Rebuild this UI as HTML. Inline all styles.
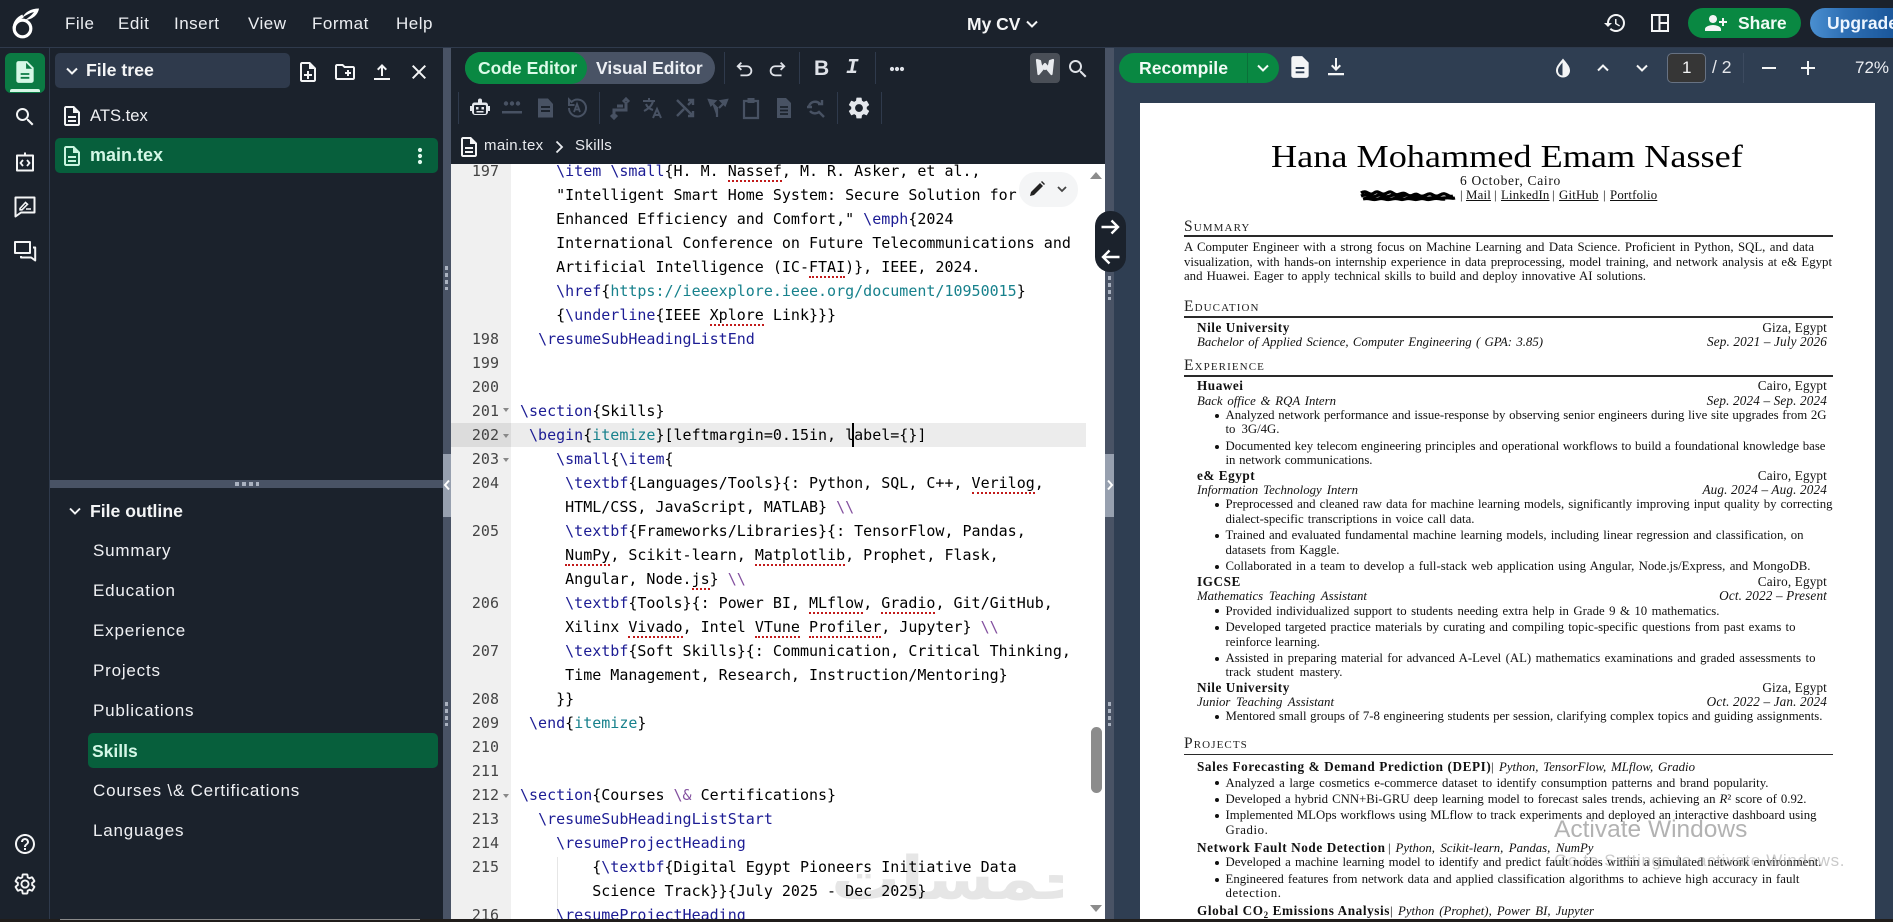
<!DOCTYPE html>
<html lang="en"><head><meta charset="utf-8"><title>My CV</title>
<style>
html,body{margin:0;padding:0;background:#1b222c;}
body{position:relative;width:1893px;height:922px;overflow:hidden;font-family:"Liberation Sans",sans-serif;color:#f4f5f6;}
.a{position:absolute;}
.t{position:absolute;white-space:nowrap;line-height:20px;}
svg{position:absolute;display:block;overflow:visible;}
.m{font-size:17px;letter-spacing:.5px;top:14px;color:#eceef2;}
.o{font-size:17px;letter-spacing:.8px;left:93px;color:#f0f1f4;}
.bd{font-weight:bold;}
.sep{position:absolute;width:1px;background:#2f3a4c;}
.dots{position:absolute;width:3px;height:24px;background:repeating-linear-gradient(#aab2c0 0 4px,transparent 4px 7px);}
pre{margin:0;font-family:"DejaVu Sans Mono",monospace;font-size:15px;line-height:24px;}
#code{color:#000;}
#code b{font-weight:normal;color:#1c1c94;}
#code u{text-decoration:none;color:#17818c;}
#code s{text-decoration:none;color:#83509f;}
#code em{font-style:normal;border-bottom:2px dotted #c11a1a;}
.l{position:absolute;white-space:nowrap;font-family:"Liberation Serif",serif;font-size:12.8px;line-height:16px;color:#111;text-align:justify;text-align-last:justify;}
.n{text-align-last:left;font-weight:bold;font-size:13.2px;letter-spacing:.55px;}
.r{text-align-last:right;text-align:right;font-size:13.2px;letter-spacing:.15px;}
.it{font-style:italic;}
.h{position:absolute;white-space:nowrap;font-family:"Liberation Serif",serif;font-size:15.5px;line-height:18px;color:#222;font-variant:small-caps;letter-spacing:1.1px;left:1184px;}
.rule{position:absolute;left:1184px;width:649px;height:1.5px;background:#2a2a2a;}
.bu{position:absolute;left:1215px;width:4px;height:4px;border-radius:50%;background:#111;}
.lk{position:absolute;white-space:nowrap;font-family:"Liberation Serif",serif;font-size:12.8px;line-height:16px;color:#111;text-decoration:underline;}
</style></head>
<body>

<!-- top bar -->
<div class="a" style="left:0;top:47px;width:1893px;height:1px;background:#2f3a4c"></div>
<svg style="left:10px;top:7px" width="30" height="32" viewBox="0 0 30 32"><circle cx="12.500" cy="21.500" r="8.300" fill="none" stroke="#fff" stroke-width="3.200"/><path d="M4.200 21.500C4.200 16 7.500 11.500 13 9" fill="none" stroke="#fff" stroke-width="3.200"/><path d="M12.500 10.500C15 5 21 1.500 29 1.500c-1 6-6 11-14 11.500 3-2 7-5 9-8-4 1-8 3-11.500 5.500z" fill="#fff"/></svg>
<div class="t m" style="left:65px">File</div>
<div class="t m" style="left:118px">Edit</div>
<div class="t m" style="left:174px">Insert</div>
<div class="t m" style="left:248px">View</div>
<div class="t m" style="left:312px">Format</div>
<div class="t m" style="left:396px">Help</div>
<div class="t bd" style="left:967px;top:14px;font-size:17.5px;color:#f4f5f6">My CV</div>
<svg style="left:1024px;top:16px" width="16" height="16" viewBox="0 0 16 16"><path d="M3 5.500l5 5 5-5" fill="none" stroke="#f4f5f6" stroke-width="2"/></svg>
<svg style="left:1603px;top:11px" width="24" height="24" viewBox="0 0 24 24"><path fill="#f4f5f6" d="M13 3c-4.970 0-9 4.030-9 9H1l3.890 3.890.07.14L9 12H6c0-3.870 3.130-7 7-7s7 3.130 7 7-3.130 7-7 7c-1.930 0-3.680-.79-4.940-2.060l-1.420 1.420C8.270 19.990 10.510 21 13 21c4.970 0 9-4.030 9-9s-4.030-9-9-9zm-1 5v5l4.280 2.540.72-1.210-3.500-2.080V8H12z"/></svg>
<svg style="left:1650px;top:13px" width="20" height="20" viewBox="0 0 20 20"><path d="M2 2h16v16H2zM9.500 2v16M9.500 10H18" fill="none" stroke="#f4f5f6" stroke-width="2"/></svg>
<div class="a" style="left:1688px;top:8px;width:113px;height:30px;border-radius:15px;background:#098842"></div>
<svg style="left:1704px;top:11px;transform:scaleX(-1)" width="24" height="24" viewBox="0 0 24 24"><path fill="#f4f5f6" d="M15 12c2.210 0 4-1.790 4-4s-1.790-4-4-4-4 1.790-4 4 1.790 4 4 4zm-9-2V7H4v3H1v2h3v3h2v-3h3v-2H6zm9 4c-2.670 0-8 1.340-8 4v2h16v-2c0-2.660-5.330-4-8-4z"/></svg>
<div class="t bd" style="left:1738px;top:13px;font-size:17.5px;color:#f0fbf5">Share</div>
<div class="a" style="left:1810px;top:8px;width:100px;height:30px;border-radius:15px;background:linear-gradient(90deg,#4a8fd0,#2e6fb4 35%,#144f92)"></div>
<div class="t bd" style="left:1827px;top:13px;font-size:17.5px;color:#eef6ff">Upgrade</div>

<!-- rail -->
<div class="a" style="left:49px;top:48px;width:1px;height:871px;background:#2f3a4c"></div>
<div class="a" style="left:5px;top:53px;width:40px;height:40px;border-radius:6px;background:#0b7a43"></div>
<div class="a" style="left:10px;top:89px;width:30px;height:3px;border-radius:2px 2px 0 0;background:#d6f7e6"></div>
<svg style="left:12px;top:59px" width="26" height="26" viewBox="0 0 24 24"><path fill="#d6f7e6" fill-rule="evenodd" d="M6 2h8l6 6v12c0 1.100-.9 2-2 2H6c-1.100 0-2-.9-2-2V4c0-1.100.9-2 2-2zm7 1.500V9h5.500zM8 13v1.700h8V13zm0 3.500v1.700h8v-1.700z"/></svg>
<svg style="left:13px;top:105px" width="24" height="24" viewBox="0 0 24 24"><path fill="#f4f5f6" d="M15.500 14h-.79l-.28-.27C15.410 12.590 16 11.110 16 9.500 16 5.910 13.090 3 9.500 3S3 5.910 3 9.500 5.910 16 9.500 16c1.610 0 3.090-.59 4.230-1.570l.27.28v.79l5 4.990L20.490 19l-4.990-5zm-6 0C7.010 14 5 11.990 5 9.500S7.010 5 9.500 5 14 7.010 14 9.500 11.990 14 9.500 14z"/></svg>
<svg style="left:13px;top:150px" width="24" height="24" viewBox="0 0 24 24"><path d="M12 2.500v3M4 5.500h16v15H4z" fill="none" stroke="#f4f5f6" stroke-width="2" stroke-linejoin="round"/><path d="M10 10l-2.500 3 2.500 3M14 10l2.500 3-2.500 3" fill="none" stroke="#f4f5f6" stroke-width="1.800"/></svg>
<svg style="left:13px;top:194px" width="24" height="24" viewBox="0 0 24 24"><path d="M2.500 3.500h19v15H8l-5.500 4z" fill="none" stroke="#f4f5f6" stroke-width="2" stroke-linejoin="round"/><path d="M7 14.500l5.500-6 2 1.800-5.500 5.500H7zM13 15h5" fill="none" stroke="#f4f5f6" stroke-width="1.600"/></svg>
<svg style="left:13px;top:239px" width="24" height="24" viewBox="0 0 24 24"><path d="M2 3h15v11H6l-4 0z" fill="none" stroke="#f4f5f6" stroke-width="2" stroke-linejoin="round"/><path d="M20 8.500h2.200v13l-4-3H8v-1.500" fill="none" stroke="#f4f5f6" stroke-width="2" stroke-linejoin="round"/></svg>
<svg style="left:13px;top:832px" width="24" height="24" viewBox="0 0 24 24"><path fill="#f4f5f6" d="M11 18h2v-2h-2v2zm1-16C6.480 2 2 6.480 2 12s4.480 10 10 10 10-4.480 10-10S17.520 2 12 2zm0 18c-4.410 0-8-3.590-8-8s3.590-8 8-8 8 3.590 8 8-3.590 8-8 8zm0-14c-2.210 0-4 1.790-4 4h2c0-1.100.9-2 2-2s2 .9 2 2c0 2-3 1.750-3 5h2c0-2.250 3-2.500 3-5 0-2.210-1.790-4-4-4z"/></svg>
<svg style="left:13px;top:872px" width="24" height="24" viewBox="0 0 24 24"><path fill="none" stroke="#f4f5f6" stroke-width="1.900" d="M19.140 12.940c.04-.3.06-.61.06-.94 0-.32-.02-.64-.07-.94l2.030-1.580c.18-.14.23-.41.12-.61l-1.920-3.320c-.12-.22-.37-.29-.59-.22l-2.390.96c-.5-.38-1.030-.7-1.620-.94l-.36-2.540c-.04-.24-.24-.41-.48-.41h-3.840c-.24 0-.43.17-.47.41l-.36 2.540c-.59.24-1.130.57-1.620.94l-2.390-.96c-.22-.08-.47 0-.59.22L2.740 8.870c-.12.21-.08.47.12.61l2.030 1.580c-.05.3-.09.63-.09.94s.02.64.07.94l-2.030 1.580c-.18.14-.23.41-.12.61l1.920 3.320c.12.22.37.29.59.22l2.390-.96c.5.38 1.030.7 1.620.94l.36 2.540c.05.24.24.41.48.41h3.840c.24 0 .44-.17.47-.41l.36-2.540c.59-.24 1.130-.56 1.620-.94l2.390.96c.22.08.47 0 .59-.22l1.920-3.320c.12-.22.07-.47-.12-.61l-2.010-1.580zM12 15.600c-1.980 0-3.600-1.620-3.600-3.600s1.620-3.600 3.600-3.600 3.600 1.620 3.600 3.600-1.620 3.600-3.600 3.600z"/></svg>

<!-- file tree -->
<div class="a" style="left:55px;top:53px;width:235px;height:35px;border-radius:5px;background:#2f3a4c"></div>
<svg style="left:64px;top:63px" width="16" height="16" viewBox="0 0 16 16"><path d="M3 5.500l5 5 5-5" fill="none" stroke="#f4f5f6" stroke-width="2"/></svg>
<div class="t bd" style="left:86px;top:60px;font-size:17.7px">File tree</div>
<svg style="left:296px;top:60px" width="24" height="24" viewBox="0 0 24 24"><path fill="#f4f5f6" d="M13 11h-2v3H8v2h3v3h2v-3h3v-2h-3zm1-9H6c-1.100 0-2 .9-2 2v16c0 1.100.89 2 1.990 2H18c1.100 0 2-.9 2-2V8l-6-6zm4 18H6V4h7v5h5v11z"/></svg>
<svg style="left:333px;top:60px" width="24" height="24" viewBox="0 0 24 24"><path fill="#f4f5f6" d="M20 6h-8l-2-2H4c-1.110 0-1.990.89-1.990 2L2 18c0 1.110.89 2 2 2h16c1.110 0 2-.89 2-2V8c0-1.110-.89-2-2-2zm0 12H4V6h5.170l2 2H20v10zm-8-4h2v2h2v-2h2v-2h-2v-2h-2v2h-2z"/></svg>
<svg style="left:370px;top:60px" width="24" height="24" viewBox="0 0 24 24"><path fill="#f4f5f6" d="M11 16V7.830L8.410 10.410 7 9l5-5 5 5-1.410 1.410L13 7.830V16zM4 18h16v2H4z"/></svg>
<svg style="left:407px;top:60px" width="24" height="24" viewBox="0 0 24 24"><path fill="#f4f5f6" d="M19 6.410 17.590 5 12 10.590 6.410 5 5 6.410 10.590 12 5 17.590 6.410 19 12 13.410 17.590 19 19 17.590 13.410 12z"/></svg>

<svg style="left:60px;top:103px" width="24" height="26" viewBox="0 0 24 26"><path fill="#f4f5f6" d="M8 17h8v2H8zm0-4h8v2H8zm6-10H6c-1.100 0-2 .9-2 2v16c0 1.100.89 2 1.990 2H18c1.100 0 2-.9 2-2V9l-6-6zm4 18H6V5h7v5h5v11z"/></svg>
<div class="t" style="left:90px;top:106px;font-size:16.6px;color:#f0f1f4">ATS.tex</div>
<div class="a" style="left:55px;top:138px;width:383px;height:35px;border-radius:5px;background:#075f3c"></div>
<svg style="left:60px;top:143px" width="24" height="26" viewBox="0 0 24 26"><path fill="#c9f5df" d="M8 17h8v2H8zm0-4h8v2H8zm6-10H6c-1.100 0-2 .9-2 2v16c0 1.100.89 2 1.990 2H18c1.100 0 2-.9 2-2V9l-6-6zm4 18H6V5h7v5h5v11z"/></svg>
<div class="t bd" style="left:90px;top:145px;font-size:18px;color:#d3f7e6">main.tex</div>
<svg style="left:417px;top:147px" width="6" height="18" viewBox="0 0 6 18"><circle cx="3" cy="3" r="2.100" fill="#dff8ec"/><circle cx="3" cy="9" r="2.100" fill="#dff8ec"/><circle cx="3" cy="15" r="2.100" fill="#dff8ec"/></svg>

<!-- outline -->
<div class="a" style="left:50px;top:480px;width:393px;height:8px;background:#495365"></div>
<div class="a" style="left:235px;top:482px;width:24px;height:4px;background:repeating-linear-gradient(90deg,#aab2c0 0 4px,transparent 4px 7px)"></div>
<svg style="left:67px;top:503px" width="16" height="16" viewBox="0 0 16 16"><path d="M3 5.500l5 5 5-5" fill="none" stroke="#f4f5f6" stroke-width="1.900"/></svg>
<div class="t bd" style="left:90px;top:501px;font-size:17.6px">File outline</div>
<div class="t o" style="top:541px">Summary</div>
<div class="t o" style="top:581px">Education</div>
<div class="t o" style="top:621px">Experience</div>
<div class="t o" style="top:661px">Projects</div>
<div class="t o" style="top:701px">Publications</div>
<div class="a" style="left:88px;top:733px;width:350px;height:35px;border-radius:5px;background:#075f3c"></div>
<div class="t bd" style="left:92px;top:741px;font-size:17.5px;color:#d3f7e6">Skills</div>
<div class="t o" style="top:781px">Courses \&amp; Certifications</div>
<div class="t o" style="top:821px">Languages</div>

<!-- left resizer -->
<div class="a" style="left:443px;top:48px;width:8px;height:871px;background:#495365"></div>
<div class="a" style="left:443px;top:454px;width:8px;height:63px;background:#97a0af"></div>
<svg style="left:443px;top:479px" width="8" height="12" viewBox="0 0 8 12"><path d="M6 1.500L2 6l4 4.500" fill="none" stroke="#fff" stroke-width="2"/></svg>
<div class="dots" style="left:445px;top:266px"></div>
<div class="dots" style="left:445px;top:702px"></div>

<!-- editor toolbar -->
<div class="a" style="left:465px;top:52px;width:250px;height:32px;border-radius:16px;background:#495365"></div>
<div class="a" style="left:465px;top:52px;width:122px;height:32px;border-radius:16px;background:#098842"></div>
<div class="t bd" style="left:478px;top:58px;font-size:17.5px;color:#dcfbe9">Code Editor</div>
<div class="t bd" style="left:596px;top:58px;font-size:17.5px;color:#eceff4">Visual Editor</div>
<div class="sep" style="left:724px;top:52px;height:32px"></div>
<svg style="left:735px;top:59px" width="20" height="20" viewBox="0 0 22 22"><path d="M7 4L3 8l4 4M3 8h10a4.500 4.500 0 0 1 0 10H6" fill="none" stroke="#dfe2e8" stroke-width="2"/></svg>
<svg style="left:767px;top:59px;transform:scaleX(-1)" width="20" height="20" viewBox="0 0 22 22"><path d="M7 4L3 8l4 4M3 8h10a4.500 4.500 0 0 1 0 10H6" fill="none" stroke="#dfe2e8" stroke-width="2"/></svg>
<div class="sep" style="left:799px;top:52px;height:32px"></div>
<div class="t bd" style="left:814px;top:59px;font-size:21px;color:#dfe2e8">B</div>
<div class="t bd" style="left:846px;top:59px;font-size:21px;font-style:italic;font-family:'Liberation Mono',monospace;color:#dfe2e8">I</div>
<div class="sep" style="left:875px;top:52px;height:32px"></div>
<svg style="left:889px;top:66px" width="16" height="6" viewBox="0 0 16 6"><circle cx="3" cy="3" r="2.100" fill="#dfe2e8"/><circle cx="8" cy="3" r="2.100" fill="#dfe2e8"/><circle cx="13" cy="3" r="2.100" fill="#dfe2e8"/></svg>
<div class="a" style="left:1030px;top:53px;width:30px;height:30px;border-radius:4px;background:#4a4f57"></div>
<svg style="left:1034px;top:57px" width="22" height="22" viewBox="0 0 22 22"><path d="M3 3l1.500 14 5-6 1.500 1 1.500-1 5 6L19 3l-3 1-1.500 7L11 7 7.500 11 6 4z" fill="#e9ebef" stroke="#e9ebef" stroke-width="2.200" stroke-linejoin="round"/></svg>
<svg style="left:1066px;top:57px" width="24" height="24" viewBox="0 0 24 24"><path fill="#dfe2e8" d="M15.500 14h-.79l-.28-.27C15.410 12.590 16 11.110 16 9.500 16 5.910 13.090 3 9.500 3S3 5.910 3 9.500 5.910 16 9.500 16c1.610 0 3.090-.59 4.230-1.570l.27.28v.79l5 4.990L20.490 19l-4.990-5zm-6 0C7.010 14 5 11.990 5 9.500S7.010 5 9.500 5 14 7.010 14 9.500 11.990 14 9.500 14z"/></svg>

<!-- row 2 -->
<div class="sep" style="left:458px;top:92px;height:32px"></div>
<svg style="left:469px;top:97px" width="22" height="22" viewBox="0 0 22 22"><path d="M11 1.500a2 2 0 0 1 2 2v2h3.500a2.500 2.500 0 0 1 2.500 2.500v1h2v5h-2v1a3 3 0 0 1-3 3H6a3 3 0 0 1-3-3v-1H1V9h2V8a2.500 2.500 0 0 1 2.500-2.500H9v-2a2 2 0 0 1 2-2z" fill="#e4e7ec"/><rect x="5" y="8" width="12" height="9" rx="1" fill="#1b222c"/><rect x="7" y="10" width="2.500" height="2.500" fill="#e4e7ec"/><rect x="12.500" y="10" width="2.500" height="2.500" fill="#e4e7ec"/><rect x="7.500" y="14" width="7" height="1.500" fill="#e4e7ec"/></svg>
<svg style="left:501px;top:97px" width="22" height="22" viewBox="0 0 22 22"><circle cx="5" cy="6.500" r="2.200" fill="#485263"/><circle cx="11" cy="6.500" r="2.200" fill="#485263"/><circle cx="17" cy="6.500" r="2.200" fill="#485263"/><rect x="1" y="14" width="20" height="2.500" fill="#485263"/></svg>
<svg style="left:534px;top:97px" width="22" height="22" viewBox="0 0 22 22"><path d="M4 1.500h10L19 7v13.500H4z" fill="#485263"/><path d="M7 10h9M7 14h9" stroke="#1b222c" stroke-width="2"/></svg>
<svg style="left:566px;top:97px" width="22" height="22" viewBox="0 0 22 22"><path d="M3 11a8.500 8.500 0 1 0 2.500-6L3 2.500V8h5.500" fill="none" stroke="#485263" stroke-width="2"/><path d="M8 15l3-8 3 8M9 12.500h4" fill="none" stroke="#485263" stroke-width="1.800"/></svg>
<div class="sep" style="left:599px;top:92px;height:32px"></div>
<svg style="left:609px;top:97px" width="22" height="22" viewBox="0 0 22 22"><path d="M5 21v-8h12V5M14 5l3-3 3 3M2 18l3 3 3-3M8 9h6" fill="none" stroke="#485263" stroke-width="3"/></svg>
<svg style="left:642px;top:97px" width="22" height="22" viewBox="0 0 22 22"><path d="M1 4h12M7 1v3M11 4c-1 5-5 8-9 10M4 7c1 3 4 5 7 6M11 21l4-9 4 9M12.500 18h5" fill="none" stroke="#485263" stroke-width="2"/></svg>
<svg style="left:675px;top:97px" width="22" height="22" viewBox="0 0 22 22"><path d="M2 3l16 16M2 19l7-7M13 8l5-5M13 3h5v5M18 14v5h-5" fill="none" stroke="#485263" stroke-width="2.400"/></svg>
<svg style="left:707px;top:97px" width="22" height="22" viewBox="0 0 22 22"><path d="M10 20V11L5 6M12 11l5-5M2 3l6 1-4 4zM20 3l-6 1 4 4z" fill="#485263" stroke="#485263" stroke-width="2.200"/></svg>
<svg style="left:740px;top:97px" width="22" height="22" viewBox="0 0 22 22"><path d="M4 4h14v17H4z" fill="none" stroke="#485263" stroke-width="2.200"/><rect x="7.500" y="1" width="7" height="5" fill="#485263"/></svg>
<svg style="left:773px;top:97px" width="22" height="22" viewBox="0 0 22 22"><path d="M4 1h9l5 5v15H4z" fill="#485263"/><path d="M7 10h8M7 13.500h8M7 17h8" stroke="#1b222c" stroke-width="1.800"/></svg>
<svg style="left:805px;top:97px" width="22" height="22" viewBox="0 0 22 22"><path d="M15 7a6.500 6.500 0 0 0-11 2M5 14a6.500 6.500 0 0 0 9 1l5 5M13 7h4V3M2 10h5" fill="none" stroke="#485263" stroke-width="2.400"/></svg>
<div class="sep" style="left:837px;top:92px;height:32px"></div>
<svg style="left:846px;top:95px" width="26" height="26" viewBox="0 0 24 24"><path fill="#e4e7ec" d="M19.140 12.940c.04-.3.06-.61.06-.94 0-.32-.02-.64-.07-.94l2.030-1.580c.18-.14.23-.41.12-.61l-1.920-3.320c-.12-.22-.37-.29-.59-.22l-2.390.96c-.5-.38-1.030-.7-1.620-.94l-.36-2.540c-.04-.24-.24-.41-.48-.41h-3.840c-.24 0-.43.17-.47.41l-.36 2.540c-.59.24-1.130.57-1.620.94l-2.390-.96c-.22-.08-.47 0-.59.22L2.740 8.870c-.12.21-.08.47.12.61l2.030 1.580c-.05.3-.09.63-.09.94s.02.64.07.94l-2.030 1.580c-.18.14-.23.41-.12.61l1.920 3.320c.12.22.37.29.59.22l2.390-.96c.5.38 1.030.7 1.620.94l.36 2.540c.05.24.24.41.48.41h3.840c.24 0 .44-.17.47-.41l.36-2.540c.59-.24 1.130-.56 1.620-.94l2.390.96c.22.08.47 0 .59-.22l1.920-3.320c.12-.22.07-.47-.12-.61l-2.010-1.580zM12 15.600c-1.980 0-3.600-1.620-3.600-3.600s1.620-3.600 3.600-3.600 3.600 1.620 3.600 3.600-1.620 3.600-3.600 3.600z"/></svg>
<div class="sep" style="left:881px;top:92px;height:32px"></div>

<!-- breadcrumb -->
<svg style="left:457px;top:134px" width="24" height="26" viewBox="0 0 24 26"><path fill="#f4f5f6" d="M8 17h8v2H8zm0-4h8v2H8zm6-10H6c-1.100 0-2 .9-2 2v16c0 1.100.89 2 1.990 2H18c1.100 0 2-.9 2-2V9l-6-6zm4 18H6V5h7v5h5v11z"/></svg>
<div class="t" style="left:484px;top:136px;font-size:15px;letter-spacing:.35px;color:#e9ebef">main.tex</div>
<svg style="left:553px;top:140px" width="12" height="14" viewBox="0 0 12 14"><path d="M3.500 1.500L9 7l-5.500 5.500" fill="none" stroke="#e9ebef" stroke-width="1.800"/></svg>
<div class="t" style="left:575px;top:136px;font-size:15px;letter-spacing:.35px;color:#e9ebef">Skills</div>

<!-- editor -->
<div class="a" style="left:451px;top:164px;width:654px;height:755px;background:#fff;overflow:hidden">
 <div class="a" style="left:0;top:0;width:60px;height:755px;background:#f0f0f0"></div>
 <div class="a" style="left:0;top:259px;width:60px;height:24px;background:#dcdcdc"></div>
 <div class="a" style="left:60px;top:259px;width:575px;height:24px;background:#ececec"></div>
 <div class="a" style="left:106px;top:693px;width:1px;height:62px;background:#e6e6e6"></div>
 <div class="a" style="left:401px;top:259px;width:2px;height:24px;background:#000"></div>
 <pre class="a" style="left:0;top:-5px;width:48px;text-align:right;color:#444">197






198
199
200
201
202
203
204

205


206

207

208
209
210
211
212
213
214
215

216</pre>
 <div class="a" style="left:52px;top:244px;width:0;height:0;border:3.500px solid transparent;border-top:4px solid #888;border-bottom:0"></div>
 <div class="a" style="left:52px;top:270px;width:0;height:0;border:3.500px solid transparent;border-top:4px solid #888;border-bottom:0"></div>
 <div class="a" style="left:52px;top:294px;width:0;height:0;border:3.500px solid transparent;border-top:4px solid #888;border-bottom:0"></div>
 <div class="a" style="left:52px;top:630px;width:0;height:0;border:3.500px solid transparent;border-top:4px solid #888;border-bottom:0"></div>
 <div class="a" style="left:380px;top:680px;width:232px;height:70px;overflow:hidden"><div style="position:absolute;left:0;top:0;font:bold 60px/70px 'DejaVu Sans',sans-serif;color:#e6e6e6;white-space:nowrap;transform:scaleX(1.15);transform-origin:0 0" dir="rtl">خمسات</div></div>
 <pre id="code" class="a" style="left:69px;top:-5px"><code style="font:inherit">    <b>\item</b> <b>\small</b>{H. M. <em>Nassef</em>, M. R. Asker, et al.,
    "Intelligent Smart Home System: Secure Solution for
    Enhanced Efficiency and Comfort," <b>\emph</b>{2024
    International Conference on Future Telecommunications and
    Artificial Intelligence (IC-<em>FTAI</em>)}, IEEE, 2024.
    <b>\href</b>{<u>https://ieeexplore.ieee.org/document/10950015</u>}
    {<b>\underline</b>{IEEE <em>Xplore</em> Link}}}
  <b>\resumeSubHeadingListEnd</b>


<b>\section</b>{Skills}
 <b>\begin</b>{<u>itemize</u>}[leftmargin=0.15in, label={}]
    <b>\small</b>{<b>\item</b>{
     <b>\textbf</b>{Languages/Tools}{: Python, SQL, C++, <em>Verilog</em>,
     HTML/CSS, JavaScript, MATLAB} <s>\\</s>
     <b>\textbf</b>{Frameworks/Libraries}{: TensorFlow, Pandas,
     <em>NumPy</em>, Scikit-learn, <em>Matplotlib</em>, Prophet, Flask,
     Angular, Node.<em>js</em>} <s>\\</s>
     <b>\textbf</b>{Tools}{: Power BI, <em>MLflow</em>, <em>Gradio</em>, Git/GitHub,
     Xilinx <em>Vivado</em>, Intel <em>VTune</em> <em>Profiler</em>, Jupyter} <s>\\</s>
     <b>\textbf</b>{Soft Skills}{: Communication, Critical Thinking,
     Time Management, Research, Instruction/Mentoring}
    }}
 <b>\end</b>{<u>itemize</u>}


<b>\section</b>{Courses <s>\&amp;</s> Certifications}
  <b>\resumeSubHeadingListStart</b>
    <b>\resumeProjectHeading</b>
        {<b>\textbf</b>{Digital Egypt Pioneers Initiative Data
        Science Track}}{July 2025 - Dec 2025}
    <b>\resumeProjectHeading</b></code></pre>
 <!-- scrollbar -->
 <div class="a" style="left:639px;top:8px;width:0;height:0;border:6px solid transparent;border-bottom:7px solid #8c8c8c;border-top:0"></div>
 <div class="a" style="left:639.500px;top:563px;width:11px;height:66px;border-radius:6px;background:#8c8c8c"></div>
 <div class="a" style="left:639px;top:741px;width:0;height:0;border:6px solid transparent;border-top:7px solid #8c8c8c;border-bottom:0"></div>
 <!-- pencil pill -->
 <div class="a" style="left:568px;top:8px;width:59px;height:35px;border-radius:17px;background:#f4f5f6"></div>
 <svg style="left:576px;top:15px" width="20" height="20" viewBox="0 0 20 20"><path d="M3 17l1-4L13 4l3 3-9 9z" fill="#222"/><path d="M14 3l1-1 3 3-1 1z" fill="#222"/></svg>
 <svg style="left:604px;top:18px" width="14" height="14" viewBox="0 0 14 14"><path d="M3 5l4 4 4-4" fill="none" stroke="#444" stroke-width="1.800"/></svg>
</div>

<!-- right resizer -->
<div class="a" style="left:1105px;top:48px;width:9px;height:871px;background:#495365"></div>
<div class="a" style="left:1105px;top:454px;width:9px;height:63px;background:#97a0af"></div>
<svg style="left:1105px;top:479px" width="9" height="12" viewBox="0 0 9 12"><path d="M3 1.500L7 6l-4 4.500" fill="none" stroke="#fff" stroke-width="2"/></svg>
<div class="dots" style="left:1108px;top:276px"></div>
<div class="dots" style="left:1108px;top:702px"></div>

<!-- pdf pane -->
<div class="a" style="left:1114px;top:48px;width:779px;height:871px;background:#2f3e52"></div>
<div class="a" style="left:1119px;top:53px;width:160px;height:30px;border-radius:15px;background:#098842"></div>
<div class="a" style="left:1247px;top:53px;width:1px;height:30px;background:#0a7039"></div>
<div class="t bd" style="left:1139px;top:58px;font-size:17.6px;color:#f2fbf6">Recompile</div>
<svg style="left:1255px;top:60px" width="16" height="16" viewBox="0 0 16 16"><path d="M3 5.500l5 5 5-5" fill="none" stroke="#f2fbf6" stroke-width="2"/></svg>
<svg style="left:1287px;top:54px" width="26" height="26" viewBox="0 0 24 24"><path fill="#f4f5f6" fill-rule="evenodd" d="M6 2h8l6 6v12c0 1.100-.9 2-2 2H6c-1.100 0-2-.9-2-2V4c0-1.100.9-2 2-2zM8 12v1.800h8V12zm0 4v1.800h8V16z"/></svg>
<svg style="left:1324px;top:55px" width="24" height="24" viewBox="0 0 24 24"><path fill="#f4f5f6" d="M11 3h2v9.170l2.590-2.580L17 11l-5 5-5-5 1.410-1.410L11 12.170zM4 18h16v2.200H4z"/></svg>
<svg style="left:1553px;top:57px" width="20" height="22" viewBox="0 0 20 22"><path d="M10 1.500c3 4 7 7.500 7 12a7 7 0 0 1-14 0c0-4.500 4-8 7-12z" fill="#f4f5f6"/><path d="M9.500 5.500c-2 2.500-4.500 5-4.500 8s2 5 4.500 5z" fill="#2f3e52"/></svg>
<svg style="left:1595px;top:60px" width="16" height="16" viewBox="0 0 16 16"><path d="M3 10.500l5-5 5 5" fill="none" stroke="#f4f5f6" stroke-width="2"/></svg>
<svg style="left:1634px;top:60px" width="16" height="16" viewBox="0 0 16 16"><path d="M3 5.500l5 5 5-5" fill="none" stroke="#f4f5f6" stroke-width="2"/></svg>
<div class="a" style="left:1667px;top:53px;width:39px;height:30px;box-sizing:border-box;border:1px solid #677283;border-radius:5px;background:#363636"></div>
<div class="t" style="left:1682px;top:58px;font-size:17px;color:#f4f5f6">1</div>
<div class="t" style="left:1712px;top:57px;font-size:17.5px;color:#e6e8ec">/ 2</div>
<div class="a" style="left:1743px;top:53px;width:1px;height:30px;background:#3c4a5f"></div>
<div class="a" style="left:1762px;top:66.500px;width:14px;height:2.500px;background:#f4f5f6"></div>
<div class="a" style="left:1801px;top:66.500px;width:14px;height:2.500px;background:#f4f5f6"></div>
<div class="a" style="left:1806.750px;top:61px;width:2.500px;height:14px;background:#f4f5f6"></div>
<div class="t" style="left:1855px;top:58px;font-size:17px;color:#eceef2">72%</div>

<!-- split arrows -->
<div class="a" style="left:1095px;top:211px;width:31px;height:61px;border-radius:15px;background:#1b222c"></div>
<svg style="left:1100px;top:217px" width="21" height="20" viewBox="0 0 21 20"><path d="M1.500 10H18M11.500 3.500L18 10l-6.500 6.500" fill="none" stroke="#fff" stroke-width="2.400"/></svg>
<svg style="left:1100px;top:247px;transform:scaleX(-1)" width="21" height="20" viewBox="0 0 21 20"><path d="M1.500 10H18M11.500 3.500L18 10l-6.500 6.500" fill="none" stroke="#fff" stroke-width="2.400"/></svg>

<!-- pdf page -->
<div class="a" style="left:1140px;top:103px;width:735px;height:816px;background:#fff"></div>
<div class="a" style="left:1271px;top:137px;white-space:nowrap;font:31.500px/40px 'Liberation Serif',serif;color:#000;transform:scaleX(1.15);transform-origin:0 0">Hana Mohammed Emam Nassef</div>
<div class="l" style="left:1460px;top:173px;font-size:13.5px;letter-spacing:.7px;text-align-last:left">6 October, Cairo</div>
<svg style="left:1360px;top:188px" width="100" height="14" viewBox="0 0 100 14"><path d="M1 5c6-4 8 4 13 0s7 4 13 0 6 4 13 1 7 4 13 1 6 4 13 0 7 4 14 0 7 3 13 1M1 8c7-3 9 3 15 0s7 3 14 0 7 3 13 0 8 3 14 1 6 2 13 1 7 1 14 0 7 1 11 0M3 11c7-2 9 2 15 0s7 2 14 0 7 2 13 0 8 2 14 0 6 2 13 0 7 1 13 0" fill="none" stroke="#000" stroke-width="3.200"/></svg>
<div class="lk" style="left:1460px;top:187px;text-decoration:none">|</div>
<div class="lk" style="left:1466px;top:187px;letter-spacing:.2px">Mail</div>
<div class="lk" style="left:1494px;top:187px;text-decoration:none">|</div>
<div class="lk" style="left:1501px;top:187px;letter-spacing:.2px">LinkedIn</div>
<div class="lk" style="left:1552px;top:187px;text-decoration:none">|</div>
<div class="lk" style="left:1559px;top:187px;letter-spacing:.2px">GitHub</div>
<div class="lk" style="left:1603px;top:187px;text-decoration:none">|</div>
<div class="lk" style="left:1610px;top:187px;letter-spacing:.2px">Portfolio</div>

<div class="h" style="top:218px">Summary</div><div class="rule" style="top:235px"></div>
<div class="l" style="left:1184px;top:239px;width:630px">A Computer Engineer with a strong focus on Machine Learning and Data Science. Proficient in Python, SQL, and data</div>
<div class="l" style="left:1184px;top:254px;width:648px">visualization, with hands-on internship experience in data preprocessing, model training, and network analysis at e&amp; Egypt</div>
<div class="l" style="left:1184px;top:268px;width:462px">and Huawei. Eager to apply technical skills to build and deploy innovative AI solutions.</div>

<div class="h" style="top:298px">Education</div><div class="rule" style="top:316px"></div>
<div class="l n" style="left:1197px;top:320px">Nile University</div>
<div class="l r" style="left:1627px;top:320px;width:200px">Giza, Egypt</div>
<div class="l it" style="left:1197px;top:334px;width:346px">Bachelor of Applied Science, Computer Engineering ( GPA: 3.85)</div>
<div class="l r it" style="left:1627px;top:334px;width:200px">Sep. 2021 – July 2026</div>

<div class="h" style="top:357px">Experience</div><div class="rule" style="top:375px"></div>
<div class="l n" style="left:1197px;top:378px">Huawei</div>
<div class="l r" style="left:1627px;top:378px;width:200px">Cairo, Egypt</div>
<div class="l it" style="left:1197px;top:393px;width:139px">Back office &amp; RQA Intern</div>
<div class="l r it" style="left:1627px;top:393px;width:200px">Sep. 2024 – Sep. 2024</div>
<div class="bu" style="top:414px"></div><div class="l" style="left:1225.500px;top:407px;width:601px">Analyzed network performance and issue-response by observing senior engineers during live site upgrades from 2G</div>
<div class="l" style="left:1225.500px;top:421px;width:54px">to 3G/4G.</div>
<div class="bu" style="top:445px"></div><div class="l" style="left:1225.500px;top:438px;width:600px">Documented key telecom engineering principles and operational workflows to build a foundational knowledge base</div>
<div class="l" style="left:1225.500px;top:452px;width:147px">in network communications.</div>
<div class="l n" style="left:1197px;top:468px">e&amp; Egypt</div>
<div class="l r" style="left:1627px;top:468px;width:200px">Cairo, Egypt</div>
<div class="l it" style="left:1197px;top:482px;width:161px">Information Technology Intern</div>
<div class="l r it" style="left:1627px;top:482px;width:200px">Aug. 2024 – Aug. 2024</div>
<div class="bu" style="top:503px"></div><div class="l" style="left:1225.500px;top:496px;width:607px">Preprocessed and cleaned raw data for machine learning models, significantly improving input quality by correcting</div>
<div class="l" style="left:1225.500px;top:511px;width:249px">dialect-specific transcriptions in voice call data.</div>
<div class="bu" style="top:534px"></div><div class="l" style="left:1225.500px;top:527px;width:578px">Trained and evaluated fundamental machine learning models, including linear regression and classification, on</div>
<div class="l" style="left:1225.500px;top:542px;width:114px">datasets from Kaggle.</div>
<div class="bu" style="top:565px"></div><div class="l" style="left:1225.500px;top:558px;width:585px">Collaborated in a team to develop a full-stack web application using Angular, Node.js/Express, and MongoDB.</div>
<div class="l n" style="left:1197px;top:574px">IGCSE</div>
<div class="l r" style="left:1627px;top:574px;width:200px">Cairo, Egypt</div>
<div class="l it" style="left:1197px;top:588px;width:170px">Mathematics Teaching Assistant</div>
<div class="l r it" style="left:1627px;top:588px;width:200px">Oct. 2022 – Present</div>
<div class="bu" style="top:609px"></div><div class="l" style="left:1225.500px;top:603px;width:494px">Provided individualized support to students needing extra help in Grade 9 &amp; 10 mathematics.</div>
<div class="bu" style="top:626px"></div><div class="l" style="left:1225.500px;top:619px;width:570px">Developed targeted practice materials by curating and compiling topic-specific questions from past exams to</div>
<div class="l" style="left:1225.500px;top:634px;width:94px">reinforce learning.</div>
<div class="bu" style="top:657px"></div><div class="l" style="left:1225.500px;top:650px;width:590px">Assisted in preparing material for advanced A-Level (AL) mathematics examinations and graded assessments to</div>
<div class="l" style="left:1225.500px;top:664px;width:117px">track student mastery.</div>
<div class="l n" style="left:1197px;top:680px">Nile University</div>
<div class="l r" style="left:1627px;top:680px;width:200px">Giza, Egypt</div>
<div class="l it" style="left:1197px;top:694px;width:137px">Junior Teaching Assistant</div>
<div class="l r it" style="left:1627px;top:694px;width:200px">Oct. 2022 – Jan. 2024</div>
<div class="bu" style="top:715px"></div><div class="l" style="left:1225.500px;top:708px;width:597px">Mentored small groups of 7-8 engineering students per session, clarifying complex topics and guiding assignments.</div>

<div class="h" style="top:735px">Projects</div><div class="rule" style="top:753.500px"></div>
<div class="l n" style="left:1197px;top:759px;letter-spacing:.6px">Sales Forecasting &amp; Demand Prediction (DEPI)</div>
<div class="l" style="left:1491px;top:759px">|</div>
<div class="l it" style="left:1499px;top:759px;width:196px">Python, TensorFlow, MLflow, Gradio</div>
<div class="bu" style="top:781px"></div><div class="l" style="left:1225.500px;top:775px;width:543px">Analyzed a large cosmetics e-commerce dataset to identify consumption patterns and brand popularity.</div>
<div class="bu" style="top:798px"></div><div class="l" style="left:1225.500px;top:791px;width:581px">Developed a hybrid CNN+Bi-GRU deep learning model to forecast sales trends, achieving an <i>R</i>² score of 0.92.</div>
<div class="bu" style="top:814px"></div><div class="l" style="left:1225.500px;top:807px;width:591px">Implemented MLOps workflows using MLflow to track experiments and deployed an interactive dashboard using</div>
<div class="l" style="left:1225.500px;top:822px;letter-spacing:.6px;text-align-last:left">Gradio.</div>
<div class="l n" style="left:1197px;top:840px;letter-spacing:.6px">Network Fault Node Detection</div>
<div class="l" style="left:1388px;top:840px">|</div>
<div class="l it" style="left:1395.500px;top:840px;width:198px">Python, Scikit-learn, Pandas, NumPy</div>
<div class="bu" style="top:861px"></div><div class="l" style="left:1225.500px;top:854px;width:596px">Developed a machine learning model to identify and predict fault nodes within a simulated network environment.</div>
<div class="bu" style="top:878px"></div><div class="l" style="left:1225.500px;top:871px;width:574px">Engineered features from network data and applied classification algorithms to achieve high accuracy in fault</div>
<div class="l" style="left:1225.500px;top:885px;letter-spacing:.6px;text-align-last:left">detection.</div>
<div class="l n" style="left:1197px;top:903px;letter-spacing:.6px">Global CO<span style="font-size:9px;position:relative;top:3px">2</span> Emissions Analysis</div>
<div class="l" style="left:1390px;top:903px">|</div>
<div class="l it" style="left:1398px;top:903px;width:196px">Python (Prophet), Power BI, Jupyter</div>

<!-- activate windows -->
<div class="t" style="left:1554px;top:815px;line-height:30px;font-size:24.500px;color:rgba(115,115,115,.55)">Activate Windows</div>
<div class="t" style="left:1554px;top:851px;font-size:17px;letter-spacing:.65px;color:rgba(150,150,150,.5)">Go to Settings to activate Windows.</div>

<!-- bottom strip -->
<div class="a" style="left:0;top:919px;width:1893px;height:3px;background:#201d1b"></div>
<div class="a" style="left:60px;top:919px;width:360px;height:1px;background:#8a8a8a"></div>
</body></html>
